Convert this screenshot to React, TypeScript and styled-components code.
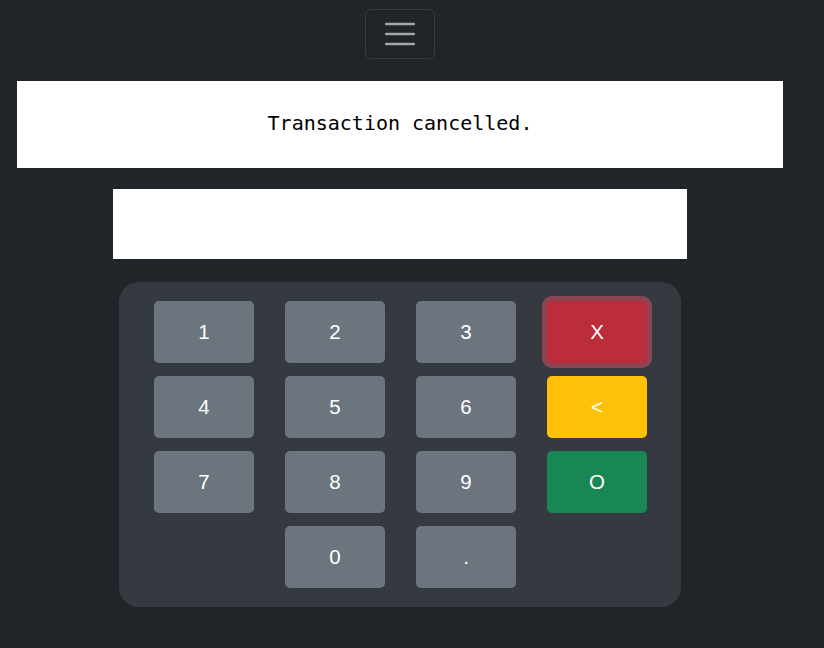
import React from "react";
import styled, { createGlobalStyle } from "styled-components";

const Global = createGlobalStyle`
  html, body { margin: 0; padding: 0; background: #212529; }
  body { font-family: "Liberation Sans", Arial, sans-serif; }
`;

const Page = styled.div`
  width: 800px;
  display: flex;
  flex-direction: column;
  align-items: center;
  padding-top: 9px;
`;

const Toggler = styled.button`
  width: 70px;
  height: 50px;
  box-sizing: border-box;
  background: transparent;
  border: 1px solid rgba(255, 255, 255, 0.1);
  border-radius: 6px;
  display: flex;
  align-items: center;
  justify-content: center;
  padding: 0;
`;

const Display = styled.div`
  width: 766px;
  height: 87px;
  box-sizing: border-box;
  padding-bottom: 4px;
  margin-top: 22px;
  background: #fff;
  display: flex;
  align-items: center;
  justify-content: center;
  font-family: "DejaVu Sans Mono", "Liberation Mono", monospace;
  font-size: 20px;
  color: #000;
`;

const Input = styled.div`
  width: 574px;
  height: 70px;
  margin-top: 21px;
  background: #fff;
`;

const Pad = styled.div`
  margin-top: 23px;
  width: 562px;
  box-sizing: border-box;
  padding: 19px 34px 19px 35px;
  background: #343a40;
  border-radius: 20px;
  display: grid;
  grid-template-columns: repeat(4, 100px);
  grid-auto-rows: 62px;
  column-gap: 31px;
  row-gap: 13px;
`;

const Key = styled.button<{ $bg: string; $ring?: boolean }>`
  background: ${(p) => p.$bg};
  color: #fff;
  border: none;
  border-radius: 5px;
  font-family: "Liberation Sans", Arial, sans-serif;
  font-size: 20.5px;
  padding: 0;
  box-shadow: ${(p) => (p.$ring ? "0 0 0 5px rgba(225, 83, 97, 0.5)" : "none")};
`;

const Blank = styled.div``;

const grey = "#6c757d";

export default function App() {
  return (
    <>
      <Global />
      <Page>
        <Toggler aria-label="menu">
          <svg width="30" height="30" viewBox="0 0 30 30">
            <path
              d="M1 5h28M1 15h28M1 25h28"
              stroke="rgba(255,255,255,0.6)"
              strokeWidth="2.5"
              strokeLinecap="round"
            />
          </svg>
        </Toggler>
        <Display>Transaction cancelled.</Display>
        <Input />
        <Pad>
          <Key $bg={grey}>1</Key>
          <Key $bg={grey}>2</Key>
          <Key $bg={grey}>3</Key>
          <Key $bg="#bb2d3b" $ring>X</Key>
          <Key $bg={grey}>4</Key>
          <Key $bg={grey}>5</Key>
          <Key $bg={grey}>6</Key>
          <Key $bg="#ffc107">&lt;</Key>
          <Key $bg={grey}>7</Key>
          <Key $bg={grey}>8</Key>
          <Key $bg={grey}>9</Key>
          <Key $bg="#198754">O</Key>
          <Blank />
          <Key $bg={grey}>0</Key>
          <Key $bg={grey}>.</Key>
          <Blank />
        </Pad>
      </Page>
    </>
  );
}
